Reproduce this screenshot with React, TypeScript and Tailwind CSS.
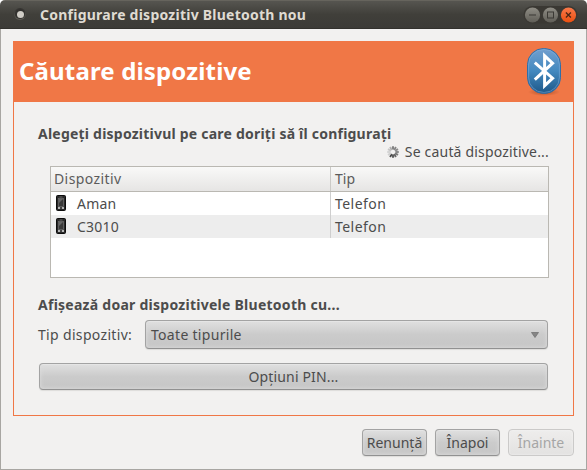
import React from "react";

const buttonBase =
  "flex items-center justify-center rounded-[4px] border border-[#a3a3a3] border-b-[#919191] bg-linear-to-b from-[#e0e0e0] via-[#cbcbcb] via-50% to-[#c6c6c6] shadow-[inset_0_1px_0_#e5e5e5,inset_0_0_4px_#dedede,0_1px_1px_#dddcda] text-[#4c4c4c] whitespace-nowrap";

function WindowButtons() {
  return (
    <svg width="56" height="20" viewBox="0 0 56 20" className="ml-auto shrink-0">
      <defs>
        <linearGradient id="grey" x1="0" y1="0" x2="0" y2="1">
          <stop offset="0" stopColor="#8f8d85" />
          <stop offset="1" stopColor="#605e57" />
        </linearGradient>
        <linearGradient id="red" x1="0" y1="0" x2="0" y2="1">
          <stop offset="0" stopColor="#f9794a" />
          <stop offset="1" stopColor="#ea4f10" />
        </linearGradient>
      </defs>
      <rect x="1.5" y="1" width="54" height="17.5" rx="8.75" fill="#3a3833" />
      <circle cx="10.5" cy="10" r="7.6" fill="url(#grey)" />
      <circle cx="28.5" cy="10" r="7.6" fill="url(#grey)" />
      <circle cx="46.5" cy="10" r="7.6" fill="url(#red)" />
      <path d="M7 10h7" stroke="#3b3934" strokeWidth="1" />
      <rect x="25.5" y="7" width="6" height="6" fill="none" stroke="#3b3934" strokeWidth="1" />
      <path d="M43.9 7.5l5 5M48.9 7.5l-5 5" stroke="#4a2615" strokeWidth="1.3" />
    </svg>
  );
}

function BluetoothLogo() {
  return (
    <svg width="36" height="50" viewBox="0 0 36 50" className="shrink-0">
      <defs>
        <linearGradient id="bt" x1="0" y1="0" x2="0" y2="1">
          <stop offset="0" stopColor="#729fcf" />
          <stop offset="0.5" stopColor="#4389bf" />
          <stop offset="1" stopColor="#1d5788" />
        </linearGradient>
        <radialGradient id="shade">
          <stop offset="0" stopColor="#803818" stopOpacity="0.6" />
          <stop offset="1" stopColor="#803818" stopOpacity="0" />
        </radialGradient>
      </defs>
      <ellipse cx="18" cy="45" rx="16" ry="4" fill="url(#shade)" />
      <rect x="1.5" y="1.5" width="33" height="45" rx="16" fill="url(#bt)" stroke="#2f6ea8" />
      <rect x="2.6" y="2.6" width="30.8" height="42.8" rx="15" fill="none" stroke="#86b2dc" strokeOpacity="0.5" />
      <path d="M8.8 15.6L26.6 31.2L18.6 38.8V8.8L26.6 16.2L8.8 32.6" fill="none" stroke="#fff" strokeWidth="3" />
    </svg>
  );
}

function PhoneIcon() {
  return (
    <svg width="10" height="16" viewBox="0 0 10 16" className="mt-[3px] shrink-0 self-start">
      <rect x="0.5" y="0.5" width="9" height="15" rx="1" fill="#292929" stroke="#0c0c0c" />
      <path d="M3.5 2h3" stroke="#777" strokeWidth="0.8" />
      <rect x="2.5" y="3.5" width="5" height="8" fill="#3a3a3a" stroke="#6a6a6a" strokeWidth="0.8" />
      <path d="M3 8L7 4H3z" fill="#666" />
      <path d="M2 13h2M6 13h2" stroke="#e4e4e4" strokeWidth="1.4" />
      <path d="M4.3 13h1.4" stroke="#777" strokeWidth="1.2" />
    </svg>
  );
}

const spokes = ["#7c7c7c", "#868686", "#8c8c8c", "#868686", "#787878", "#666", "#555", "#4a4a4a", "#cfcfcf", "#d2d2d2", "#c6c6c6", "#b0b0b0"];

function Spinner() {
  return (
    <svg width="12" height="12" viewBox="0 0 12 12" className="shrink-0">
      {spokes.map((color, i) => (
        <path key={i} d="M6 3.6V0.2" stroke={color} strokeWidth="1.9" transform={`rotate(${i * 30} 6 6)`} />
      ))}
    </svg>
  );
}

function DeviceRow({ name, striped }: { name: string; striped?: boolean }) {
  return (
    <div className={`flex h-[23px] ${striped ? "bg-[#ededed]" : "bg-white"}`}>
      <div className="flex w-[280px] items-center border-r border-[#cfcfcf] pl-[5px]">
        <PhoneIcon />
        <span className="ml-[11px] tracking-[0.2px]">{name}</span>
      </div>
      <div className="flex items-center pl-[4px] tracking-[0.45px]">Telefon</div>
    </div>
  );
}

export default function App() {
  return (
    <div className="h-[470px] w-[587px] bg-white font-['Noto_Sans','Open_Sans',sans-serif] text-[14px] leading-[20px] text-[#4c4c4c]">
      <div className="flex h-full flex-col overflow-hidden rounded-t-[5px] bg-[#f2f1f0]">
        <header className="flex h-[29px] shrink-0 items-center border-t border-b border-t-[#66645d] border-b-[#32312d] bg-linear-to-b from-[#565550] via-[#403f3a] via-50% to-[#3c3b37] pr-[9px] pl-[14px]">
          <div className="mb-px flex size-[12px] items-center justify-center rounded-full bg-linear-to-b from-[#33322f] to-[#5f5d57]">
            <div className="flex size-[10px] items-center justify-center rounded-full bg-[#33322f]">
              <div className="size-[7px] rounded-full bg-[#d0cdc6]" />
            </div>
          </div>
          <h1 className="ml-[14px] font-bold whitespace-nowrap tracking-[0.24px] text-[#dfdbd2]">Configurare dispozitiv Bluetooth nou</h1>
          <WindowButtons />
        </header>
        <div className="flex flex-1 flex-col border-x border-b border-[#a8a6a2] px-[12px] pt-[12px]">
          <main className="h-[375px] shrink-0 border border-[#f07746]">
            <div className="flex h-[60px] items-center justify-between bg-[#f07746] pr-[11px] pl-[5px]">
              <h2 className="mt-[-2px] text-[24px] leading-[32px] font-bold whitespace-nowrap tracking-[0.15px] text-white">Căutare dispozitive</h2>
              <BluetoothLogo />
            </div>
            <div className="flex flex-col pt-[22px] pr-[25px] pl-[24px]">
              <h3 className="h-[20px] font-bold whitespace-nowrap tracking-[0.22px]">Alegeți dispozitivul pe care doriți să îl configurați</h3>
              <div className="mr-[-1px] flex h-[22px] items-start justify-end">
                <div className="flex h-[16px] items-center gap-[6px] whitespace-nowrap">
                  <Spinner />
                  <span className="tracking-[0.18px]">Se caută dispozitive...</span>
                </div>
              </div>
              <div className="ml-[12px] h-[112px] w-[499px] border border-[#bab8b2] bg-white">
                <div className="flex h-[25px] border-b border-[#bab8b2] bg-linear-to-b from-[#f9f9f8] to-[#e6e5e4] text-[#5b5b5b]">
                  <div className="flex w-[280px] items-center border-r border-[#cbcac7] pl-[3px] tracking-[0.4px]">Dispozitiv</div>
                  <div className="flex items-center pl-[4px]">Tip</div>
                </div>
                <DeviceRow name="Aman" />
                <DeviceRow name="C3010" striped />
              </div>
              <h3 className="mt-[17px] h-[20px] font-bold whitespace-nowrap tracking-[0.26px]">Afișează doar dispozitivele Bluetooth cu...</h3>
              <div className="mt-[5px] flex h-[29px] items-center">
                <span className="w-[107px] whitespace-nowrap tracking-[0.33px]">Tip dispozitiv:</span>
                <button className={`${buttonBase} h-[29px] w-[403px] justify-between! pr-[8px] pl-[5px]`}>
                  <span className="tracking-[0.3px]">Toate tipurile</span>
                  <svg width="8" height="6" viewBox="0 0 8 6">
                    <path d="M0.5 0.5h7L4 5.5z" fill="#858585" stroke="#6b6b6b" strokeWidth="0.7" />
                  </svg>
                </button>
              </div>
              <button className={`${buttonBase} mt-[14px] ml-px h-[27px] w-[509px] tracking-[0.15px]`}>Opțiuni PIN...</button>
            </div>
          </main>
          <footer className="mt-[13px] flex justify-end gap-[8px]">
            <button className={`${buttonBase} h-[27px] w-[65px]`}>Renunță</button>
            <button className={`${buttonBase} h-[27px] w-[65px]`}>Înapoi</button>
            <button
              disabled
              className="flex h-[27px] w-[66px] items-center justify-center rounded-[4px] border border-[#cbcac9] bg-linear-to-b from-[#eeedec] to-[#e3e2e1] whitespace-nowrap text-[#a6a6a6] shadow-[inset_0_0_2px_#f5f5f5]"
            >
              Înainte
            </button>
          </footer>
        </div>
      </div>
    </div>
  );
}
